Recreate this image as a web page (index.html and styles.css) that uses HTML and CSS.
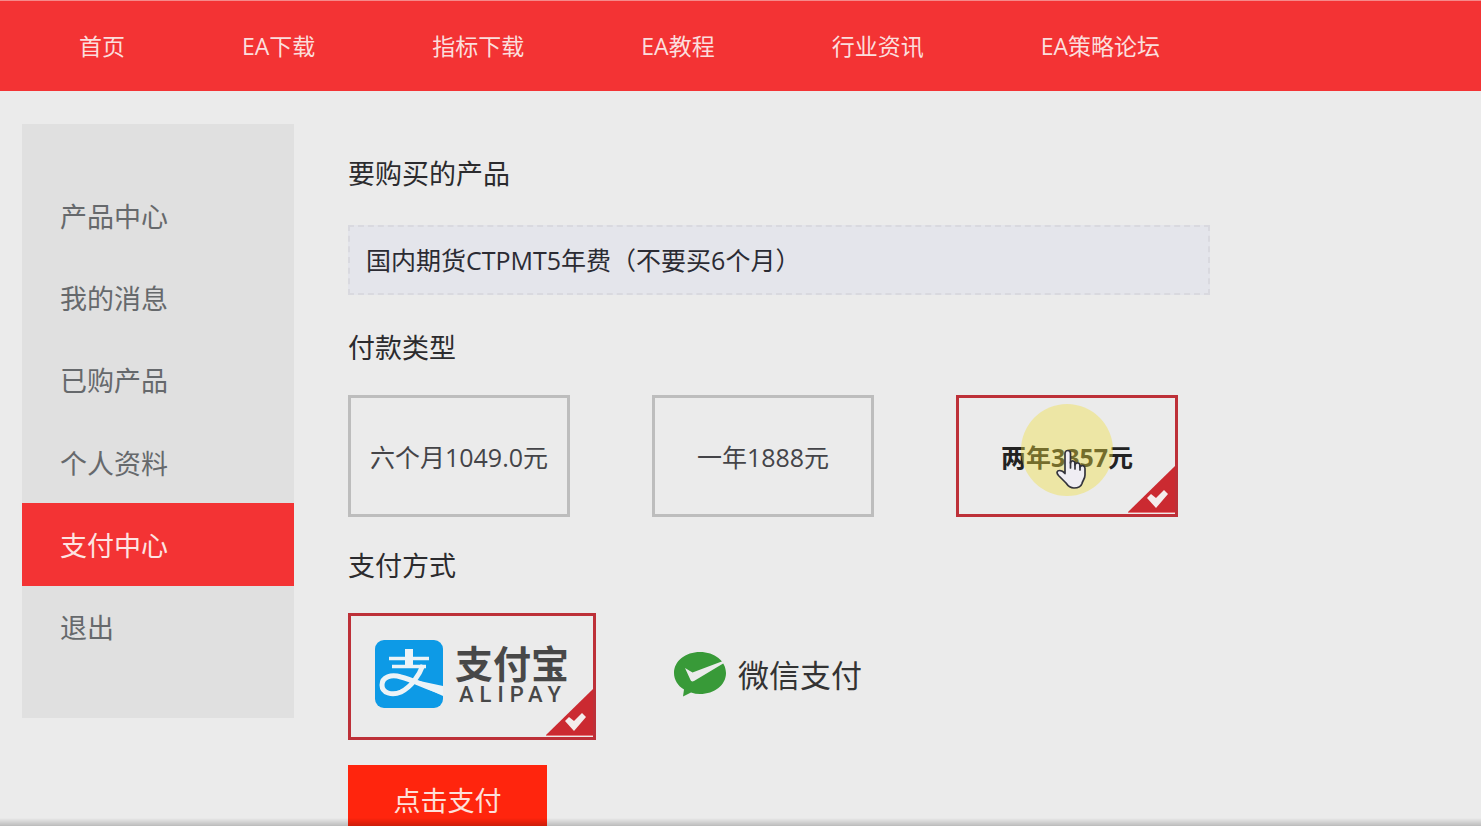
FILE: index.html
```html
<!DOCTYPE html>
<html lang="zh-CN">
<head>
    <meta charset="UTF-8">
    <meta name="viewport" content="width=device-width, initial-scale=1">
    <title>支付中心</title>
    <link rel="stylesheet" href="styles.css">
</head>
<body>
    <!-- Top Navigation -->
    <header class="topbar">
        <nav class="topnav">
            <a href="#">首页</a>
            <a href="#">EA下载</a>
            <a href="#">指标下载</a>
            <a href="#">EA教程</a>
            <a href="#">行业资讯</a>
            <a href="#">EA策略论坛</a>
        </nav>
    </header>

    <div class="container">
        <!-- Side Menu -->
        <nav class="sidebar">
            <a href="#">产品中心</a>
            <a href="#">我的消息</a>
            <a href="#">已购产品</a>
            <a href="#">个人资料</a>
            <a href="#" class="active">支付中心</a>
            <a href="#">退出</a>
        </nav>

        <!-- Payment Form -->
        <main class="content">
            <form class="pay-form">
                <section class="section">
                    <h2>要购买的产品</h2>
                    <div class="product">国内期货CTPMT5年费（不要买6个月）</div>
                </section>

                <section class="section">
                    <h2>付款类型</h2>
                    <div class="options">
                        <label class="option price">
                            <input type="radio" name="price">
                            <span>六个月1049.0元</span>
                        </label>
                        <label class="option price">
                            <input type="radio" name="price">
                            <span>一年1888元</span>
                        </label>
                        <label class="option price">
                            <input type="radio" name="price" checked>
                            <span>两年3357元</span>
                            <svg class="tick" viewBox="0 0 48 48" aria-hidden="true">
                                <path d="M48 0V46H1z" fill="#cb2a31"/>
                                <path d="M1 46.500H48" stroke="#e9767a" stroke-width="1"/>
                                <path d="M20 32l4-4 5 4 8-8 4 4-12 14z" fill="#f4ecec"/>
                            </svg>
                            <span class="pointer">
                                <svg viewBox="0 0 30 40" aria-hidden="true">
                                    <path d="M9 23V4.500C9 .5 14.500.5 14.500 4.500V14C15 11 19 11.500 19 14.500V16C20 13 24 13.500 24 16.500V18C25.500 15.500 29 16.500 29 19.500V26C29 30 26.500 31.500 26 34.500C25 37.500 22 39 18 39S12 37 10 34L2.500 26.500C0 23.500 1 21.500 3.500 21.500C5.500 21.500 7 22 9 24.500z" fill="#efedf3" stroke="#34343c" stroke-width="1.700" stroke-linejoin="round"/>
                                    <path d="M14.500 13V19M19 14.500V20M24 16.500V21" fill="none" stroke="#34343c" stroke-width="1.700" stroke-linecap="round"/>
                                </svg>
                            </span>
                        </label>
                    </div>
                </section>

                <section class="section">
                    <h2>支付方式</h2>
                    <div class="options methods">
                        <label class="option method">
                            <input type="radio" name="method" checked>
                            <svg class="alipay-icon" viewBox="0 0 68 68" aria-hidden="true">
                                <rect width="68" height="68" rx="9" fill="#0d9ae6"/>
                                <g fill="none" stroke="#ecf3f7">
                                    <path d="M34 9V25" stroke-width="8"/>
                                    <path d="M14 18.500H54M17 26.500H51" stroke-width="3.500"/>
                                    <path d="M48 25C44 36 36 47 26 52C17 56 7 53 7 45C7 37 16 34 26 37C39 40 52 48 68 52" stroke-width="5"/>
                                </g>
                                <path d="M40 40L68 46V56L37 42z" fill="#ecf3f7"/>
                            </svg>
                            <span class="alipay-name">
                                <b>支付宝</b>
                                <small>ALIPAY</small>
                            </span>
                            <svg class="tick" viewBox="0 0 48 48" aria-hidden="true">
                                <path d="M48 0V46H1z" fill="#cb2a31"/>
                                <path d="M1 46.500H48" stroke="#e9767a" stroke-width="1"/>
                                <path d="M20 32l4-4 5 4 8-8 4 4-12 14z" fill="#f4ecec"/>
                            </svg>
                        </label>
                        <label class="option method wechat">
                            <input type="radio" name="method">
                            <svg class="wechat-icon" viewBox="0 0 52 46" aria-hidden="true">
                                <path d="M26 1C11.500 1 0 10 0 22C0 29 4 35 10 38.500L9 45.500L17 41.500C20 42.500 23 43 26 43C40.500 43 52 34 52 22C52 10 40.500 1 26 1z" fill="#389a38"/>
                                <path d="M11 17L18.500 21.500L49 10L50 12L20 30C18 31 17 30 16.500 29z" fill="#ebebeb"/>
                            </svg>
                            <span class="wechat-name">微信支付</span>
                        </label>
                    </div>
                </section>

                <button type="button" class="submit">点击支付</button>
            </form>
        </main>
    </div>
</body>
</html>
```
FILE: styles.css
```css
/* Basic Styles */
* {
    box-sizing: border-box;
}

body {
    margin: 0;
    height: 100vh;
    overflow: hidden;
    font-family: "Open Sans", "Noto Sans CJK SC", sans-serif;
    background-color: #ebebeb;
    color: #333;
}

/* Shade along the bottom edge */
body::after {
    content: "";
    position: fixed;
    left: 0;
    right: 0;
    bottom: 0;
    height: 8px;
    background: linear-gradient(rgba(0, 0, 0, 0), rgba(0, 0, 0, 0.2));
}

a {
    text-decoration: none;
}

/* Top Navigation */
.topbar {
    background-color: #f33334;
    border-top: 1px solid #f58a8a;
}

.topnav {
    display: flex;
    gap: 117px;
    padding-left: 79px;
}

.topnav a {
    color: #fbdedd;
    font-size: 23px;
    line-height: 90px;
    white-space: nowrap;
}

.container {
    display: flex;
    align-items: flex-start;
    gap: 54px;
    padding: 33px 22px 0;
}

/* Side Menu */
.sidebar {
    display: flex;
    flex-direction: column;
    flex: none;
    width: 272px;
    min-height: 594px;
    padding: 50px 0;
    background-color: #e0e0e0;
}

.sidebar a {
    display: flex;
    flex: 1;
    align-items: center;
    padding-left: 38px;
    color: #66696c;
    font-size: 27px;
}

.sidebar .active {
    background-color: #f33334;
    color: #fde4e2;
}

/* Payment Form */
.content {
    flex: 1;
    max-width: 862px;
    padding-top: 30px;
}

h2 {
    margin: 0 0 27px;
    color: #2b2b2e;
    font-size: 27px;
    font-weight: normal;
    line-height: 40px;
}

.product {
    margin: 31px 0 33px;
    padding: 0 16px;
    border: 2px dashed #d9d9df;
    background-color: #e4e5eb;
    color: #2b2b33;
    font-size: 25px;
    line-height: 66px;
}

.options {
    display: flex;
    gap: 82px;
    margin-bottom: 29px;
}

.option {
    position: relative;
    display: flex;
    align-items: center;
    justify-content: center;
    border: 3px solid #bdbdbd;
    cursor: pointer;
}

.option input {
    position: absolute;
    opacity: 0;
    margin: 0;
}

.option:has(input:checked) {
    border-color: #bd3038;
}

.price {
    width: 222px;
    height: 122px;
    color: #444448;
    font-size: 25px;
    white-space: nowrap;
}

.price input:checked + span {
    color: #222;
    font-weight: bold;
}

/* Selected corner */
.tick {
    position: absolute;
    right: 0;
    bottom: 0;
    width: 48px;
    height: 48px;
}

/* Hand pointer with highlight */
.pointer {
    position: absolute;
    left: 62px;
    top: 6px;
    width: 92px;
    height: 92px;
    border-radius: 50%;
    background-color: rgba(240, 222, 60, 0.4);
}

.pointer svg {
    position: absolute;
    left: 35px;
    top: 45px;
    width: 30px;
    height: 40px;
}

/* Payment Methods */
.methods {
    gap: 48px;
    margin-bottom: 25px;
}

.method {
    width: 248px;
    height: 127px;
    gap: 12px;
    padding-bottom: 6px;
}

.wechat {
    border-color: transparent;
}

.alipay-icon {
    width: 68px;
    height: 68px;
}

.alipay-name {
    display: flex;
    flex-direction: column;
    color: #484848;
}

.alipay-name b {
    font-size: 38px;
    line-height: 42px;
}

.alipay-name small {
    padding-left: 4px;
    font-family: Roboto, sans-serif;
    font-size: 22px;
    font-weight: 500;
    letter-spacing: 6px;
    line-height: 22px;
}

.wechat-icon {
    width: 52px;
    height: 46px;
}

.wechat-name {
    color: #333;
    font-size: 31px;
}

.submit {
    width: 199px;
    height: 68px;
    border: 0;
    background-color: #ff250d;
    color: #fde0da;
    font-family: inherit;
    font-size: 27px;
    cursor: pointer;
}
```
